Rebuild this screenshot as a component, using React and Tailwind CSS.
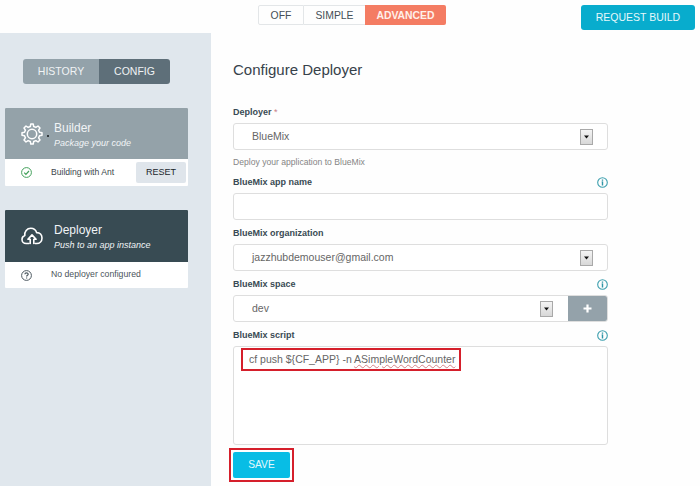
import React from "react";

function Info() {
  return (
    <svg className="block h-[11px] w-[11px]" viewBox="0 0 11 11" fill="none">
      <circle cx="5.5" cy="5.5" r="4.8" stroke="#3d9fae" strokeWidth="1.1" />
      <path d="M5.5 2.4v1.4M5.5 4.6v3.8M4.7 5h.8" stroke="#2f95a6" strokeWidth="1.4" />
    </svg>
  );
}

function Arrow() {
  return (
    <span className="flex h-4 w-[13px] items-center justify-center border border-[#a9a9a9] bg-linear-to-b from-[#f4f4f4] to-[#d8d8d8]">
      <svg className="h-1 w-[5px]" viewBox="0 0 5 4">
        <path d="M0 0.4H5L2.5 3.6Z" fill="#111" />
      </svg>
    </span>
  );
}

function Label({ children, info }) {
  return (
    <div className="flex h-[11px] items-center justify-between text-[9px] leading-[11px] font-bold text-[#394a54]">
      <span>{children}</span>
      {info && <Info />}
    </div>
  );
}

const field = "flex h-[27px] items-center rounded-[3px] border border-[#dedede] bg-white";

function Stage({ title, subtitle, icon, tone, children }) {
  return (
    <section className="w-[183px] overflow-hidden rounded-[1px] bg-white">
      <div className={"flex items-center pl-4 text-[#f1f4f6] " + tone}>
        {icon}
        <div className="ml-[11px] pt-[3px]">
          <h2 className="text-[12px] leading-[15px]">{title}</h2>
          <p className="text-[9px] leading-[14px] italic">{subtitle}</p>
        </div>
      </div>
      {children}
    </section>
  );
}

function Gear() {
  return (
    <span className="relative block h-[22px] w-[22px]">
      <svg className="h-[22px] w-[22px]" viewBox="0 0 22 22" fill="none" stroke="#fff" strokeWidth="1.5" strokeLinejoin="round">
        <path d="M9.3 3.5 9.8 1h2.4l.5 2.5 2.2.9L17 3l2 2-1.4 2.1.9 2.2 2.5.5v2.4l-2.5.5-.9 2.2L19 17l-2 2-2.1-1.4-2.2.9-.5 2.5H9.8l-.5-2.5-2.2-.9L5 19l-2-2 1.4-2.1-.9-2.2L1 12.2V9.8l2.5-.5.9-2.2L3 5l2-2 2.1 1.4Z" />
        <circle cx="11" cy="11" r="4.7" />
      </svg>
      <i className="absolute top-[12px] left-[26px] h-[2px] w-[2px] rounded-full bg-[#15191b]" />
    </span>
  );
}

function Cloud() {
  return (
    <svg className="h-[22px] w-[22px]" viewBox="0 0 22 22" fill="none" stroke="#fff" strokeWidth="1.6" strokeLinecap="round" strokeLinejoin="round">
      <path d="M8 18.5H5.2C2.8 18.5 1 16.8 1 14.5c0-2 1.2-3.4 2.8-3.9C3.2 6.5 6 3.3 9.8 3.3c2.9 0 5 1.7 5.8 4.3 3.3-.2 5.4 2.3 5.4 5.3 0 3.2-2.2 5.6-5.3 5.6H14" />
      <path d="M9.2 18.5v-4.300H6.900L11 9.900l4.100 4.300h-2.300v4.300" />
    </svg>
  );
}

export default function App() {
  return (
    <div className="flex h-[486px] w-[700px] flex-col overflow-hidden bg-[#fefefe] font-['Liberation_Sans',Arial,sans-serif] text-[10.5px] text-[#666]">
      <header className="flex h-[33px] shrink-0 items-start justify-between pr-[5px] pl-[258px]">
        <div className="mt-[5px] flex h-5 text-[10.4px] leading-[18px] text-[#454f57]">
          <button className="w-[46px] rounded-l-[2px] border border-[#e3e6e8] pt-px">OFF</button>
          <button className="w-[61px] border-y border-[#e3e6e8] pt-px">SIMPLE</button>
          <button className="w-[81px] rounded-r-[2px] bg-[#f47c63] pt-px font-bold text-[#fff0ea]">ADVANCED</button>
        </div>
        <button className="mt-[5px] h-[25px] w-[114px] rounded-[3px] bg-[#08accd] text-[#e6f8fb]">REQUEST BUILD</button>
      </header>

      <div className="flex min-h-0 flex-1">
        <aside className="w-[211px] shrink-0 bg-[#e0e7ed] pt-[26px] pl-[5px]">
          <nav className="ml-[18px] flex h-[25px] w-[147px] overflow-hidden rounded-[3px] text-[#f0f3f5]">
            <button className="w-[76px] bg-[#93a2aa]">HISTORY</button>
            <button className="w-[71px] bg-[#5e6f79]">CONFIG</button>
          </nav>

          <div className="mt-6 flex flex-col gap-6">
            <Stage title="Builder" subtitle="Package your code" tone="h-[51px] bg-[#94a2a9]" icon={<Gear />}>
              <div className="flex h-[27px] items-center pr-[2px] pl-4 text-[8.6px] text-[#3c464c]">
                <svg className="h-[11px] w-[11px]" viewBox="0 0 11 11" fill="none" stroke="#42a05a">
                  <circle cx="5.5" cy="5.5" r="4.9" />
                  <path d="m3.2 5.6 1.7 1.7L8 4" strokeWidth="1.2" />
                </svg>
                <span className="ml-[19px] flex-1 whitespace-nowrap">Building with Ant</span>
                <button className="h-[21px] w-[50px] rounded-[2px] bg-[#dfe5eb] text-[9px] text-[#20262a]">RESET</button>
              </div>
            </Stage>
            <Stage title="Deployer" subtitle="Push to an app instance" tone="h-[52px] bg-[#384b53]" icon={<Cloud />}>
              <div className="flex h-[26px] items-center pl-4 text-[8.7px] text-[#4b555b]">
                <svg className="h-[11px] w-[11px]" viewBox="0 0 11 11" fill="none" stroke="#4d5960">
                  <circle cx="5.5" cy="5.5" r="4.9" />
                  <path d="M3.9 4.3C3.9 2.5 7.2 2.5 7.2 4.2c0 1-1.600 1-1.600 2.300M5.600 7.400v1.100" strokeWidth="1.2" />
                </svg>
                <span className="ml-[19px]">No deployer configured</span>
              </div>
            </Stage>
          </div>
        </aside>

        <main className="relative w-[397px] pt-[27px] pl-[22px]">
          <h1 className="h-[47px] text-[15px] leading-[19px] text-[#37424a]">Configure Deployer</h1>

          <Label>Deployer <span className="font-normal text-[#c77f86]">*</span></Label>
          <div className={field + " mt-[5px] justify-between pr-[14px] pl-[18px]"}>
            <span>BlueMix</span>
            <Arrow />
          </div>
          <p className="mt-[6px] h-[13px] text-[8.6px] leading-[13px] text-[#858585]">Deploy your application to BlueMix</p>

          <div className="mt-2"><Label info>BlueMix app name</Label></div>
          <div className={field + " mt-[5px]"} />

          <div className="mt-2"><Label>BlueMix organization</Label></div>
          <div className={field + " mt-[5px] justify-between pr-[14px] pl-[18px]"}>
            <span>jazzhubdemouser@gmail.com</span>
            <Arrow />
          </div>

          <div className="mt-2"><Label info>BlueMix space</Label></div>
          <div className={field + " mt-[5px] justify-between overflow-hidden pl-[18px]"}>
            <span>dev</span>
            <div className="flex items-center gap-[15px]">
              <Arrow />
              <button className="flex h-[27px] w-[39px] items-center justify-center bg-[#94a2aa]">
                <svg className="h-[9px] w-[9px]" viewBox="0 0 9 9">
                  <path d="M4.5 0.5v8M0.5 4.5h8" stroke="#fff" strokeWidth="2.2" />
                </svg>
              </button>
            </div>
          </div>

          <div className="mt-2"><Label info>BlueMix script</Label></div>
          <div className="mt-[5px] h-[99px] rounded-[3px] border border-[#dedede] bg-white pt-[6px] pl-[15px] leading-[13px] whitespace-nowrap">
            cf push {"${CF_APP}"} -n{" "}
            <span className="underline decoration-[#d78388] decoration-wavy decoration-[0.5px] underline-offset-1">ASimpleWordCounter</span>
          </div>
          <button className="mt-[7px] block h-[26px] w-[57px] rounded-[2px] bg-[#08bde5] text-[10.2px] text-[#e4f9fd]">SAVE</button>

          <div className="pointer-events-none absolute top-[315px] left-[30px] h-[23px] w-[220px] border-2 border-[#d51f2b]" />
          <div className="pointer-events-none absolute top-[415px] left-[18px] h-[34px] w-[65px] border-2 border-[#d51f2b]" />
        </main>
      </div>
    </div>
  );
}
